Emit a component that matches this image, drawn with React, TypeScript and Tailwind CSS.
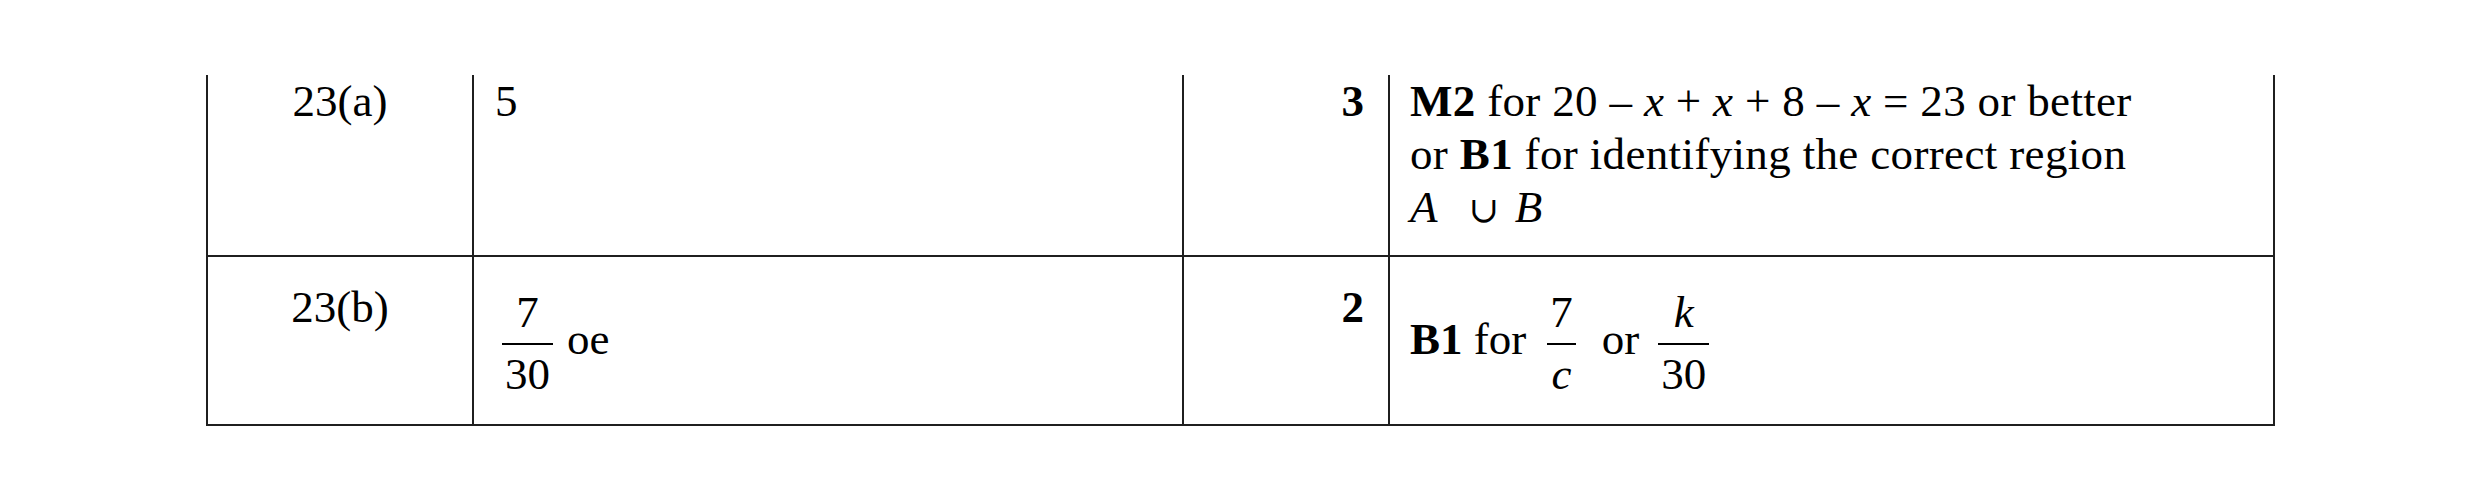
import type { ReactNode } from 'react';

const serif = "font-['Liberation_Serif','Times_New_Roman',serif]";

function Frac({ num, den, className = '' }: { num: ReactNode; den: ReactNode; className?: string }) {
  return (
    <span className={`inline-flex flex-col items-center ${className}`}>
      <span className="px-[3px] leading-[45px]">{num}</span>
      <span className="mt-[8px] h-[2px] w-full bg-black" />
      <span className="mt-[7px] px-[3px] leading-[45px]">{den}</span>
    </span>
  );
}

export default function App() {
  return (
    <div className={`h-[502px] w-full bg-white pt-[75px] text-[45px] leading-[53px] text-black ${serif}`}>
      <div className="ml-[206px] w-[2069px]">
        {/* Row 23(a) */}
        <div className="flex h-[180px]">
          <div className="w-[266px] border-l-2 border-[#1f1f1f] text-center">23(a)</div>
          <div className="w-[710px] border-l-2 border-[#1f1f1f] pl-[21px]">5</div>
          <div className="w-[206px] border-l-2 border-[#1f1f1f] pr-[24px] text-right font-bold">3</div>
          <div className="w-[887px] border-x-2 border-[#1f1f1f] pl-[20px]">
            <div className="tracking-[0.33px]">
              <b>M2</b> for 20 – <i>x</i> + <i>x</i> + 8 – <i>x</i> = 23 or better
            </div>
            <div className="tracking-[0.35px]">
              or <b>B1</b> for identifying the correct region
            </div>
            <div className="flex items-baseline">
              <i>A</i>
              <span className="ml-[31px] mr-[16px] font-['DejaVu_Serif',serif] text-[36px]">∪</span>
              <i>B</i>
            </div>
          </div>
        </div>

        {/* Row 23(b) */}
        <div className="flex h-[171px] border-y-2 border-[#1f1f1f]">
          <div className="w-[266px] border-l-2 border-[#1f1f1f] pt-[24px] text-center">23(b)</div>
          <div className="flex w-[710px] items-start border-l-2 border-[#1f1f1f] pl-[28px] pt-[33px]">
            <Frac num="7" den="30" />
            <span className="ml-[14px] mt-[23px]">oe</span>
          </div>
          <div className="w-[206px] border-l-2 border-[#1f1f1f] pr-[24px] pt-[24px] text-right font-bold">2</div>
          <div className="flex w-[887px] items-start border-x-2 border-[#1f1f1f] pl-[20px] pt-[33px]">
            <span className="mt-[23px] whitespace-pre">
              <b>B1</b> for
            </span>
            <Frac num="7" den={<i>c</i>} className="ml-[21px]" />
            <span className="ml-[26px] mt-[23px]">or</span>
            <Frac num={<i>k</i>} den="30" className="ml-[19px]" />
          </div>
        </div>
      </div>
    </div>
  );
}
